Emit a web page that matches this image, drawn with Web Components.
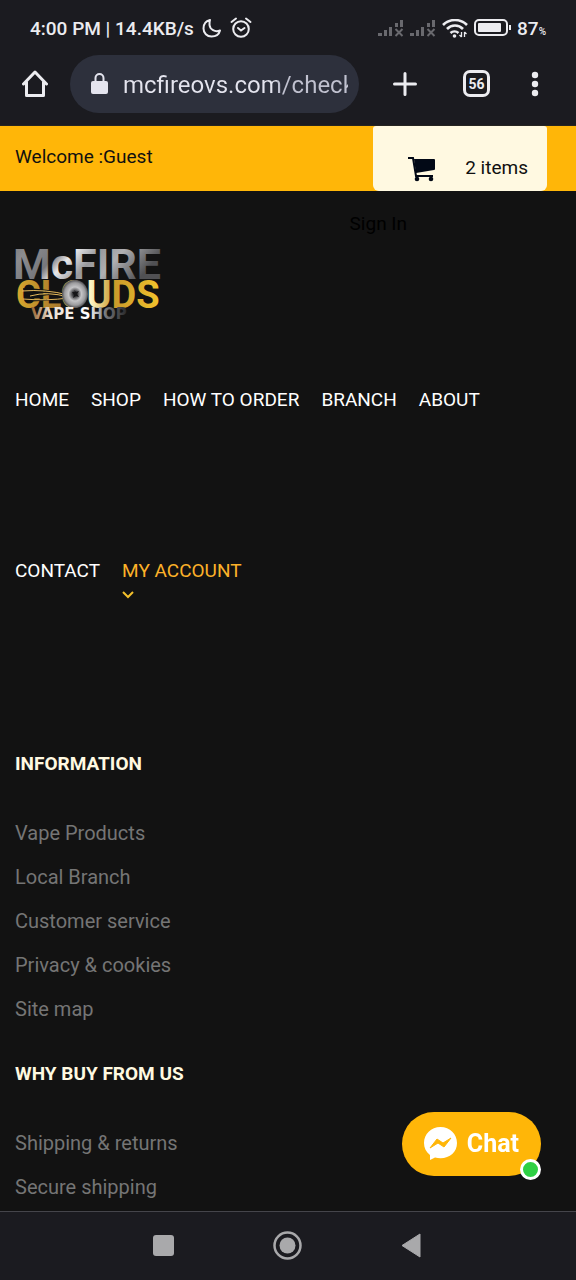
<!DOCTYPE html>
<html lang="en">
<head>
<meta charset="utf-8">
<meta name="viewport" content="width=device-width, initial-scale=1">
<title>McFire Clouds Vape Shop</title>
<style>
  body { margin: 0; background: #121212; font-family: Roboto, "Liberation Sans", sans-serif; }
</style>
</head>
<body>
<phone-screen>
  <status-bar slot="top"></status-bar>
  <browser-bar slot="top"></browser-bar>
  <shop-header></shop-header>
  <shop-nav></shop-nav>
  <footer-links>
    <span slot="title">INFORMATION</span>
    <footer-link>Vape Products</footer-link>
    <footer-link>Local Branch</footer-link>
    <footer-link>Customer service</footer-link>
    <footer-link>Privacy &amp; cookies</footer-link>
    <footer-link>Site map</footer-link>
  </footer-links>
  <footer-links>
    <span slot="title">WHY BUY FROM US</span>
    <footer-link>Shipping &amp; returns</footer-link>
    <footer-link>Secure shipping</footer-link>
  </footer-links>
  <chat-button slot="overlay">Chat</chat-button>
  <system-nav slot="bottom"></system-nav>
</phone-screen>
<script>
function define(name, html) {
  const template = document.createElement('template');
  template.innerHTML = html;
  customElements.define(name, class extends HTMLElement {
    constructor() {
      super();
      this.attachShadow({ mode: 'open' }).append(template.content.cloneNode(true));
    }
  });
}

define('phone-screen', `
<style>
  :host { display: flex; flex-direction: column; min-height: 100vh; }
  main { flex: 1; }
</style>
<slot name="top"></slot>
<main><slot></slot></main>
<slot name="overlay"></slot>
<slot name="bottom"></slot>`);

define('signal-icon', `
<style>
  :host, svg { display: block; }
</style>
<svg width="26" height="18" viewBox="0 0 26 18" fill="#69696e"><path d="M0 14h4v3H0zM6 11h3v6H6zM11 8h3v9h-3zM17 4h3v4h-3zM22 1h3v7h-3z"/><path d="m17.500 10 7 7m0-7-7 7" stroke="#69696e" stroke-width="2"/></svg>`);

define('status-bar', `
<style>
  :host { display: flex; align-items: center; height: 54px; padding: 2px 30px 0; box-sizing: border-box;
    background: #1b1b20; color: #ececf0; font-size: 19px; font-weight: 500; }
  .side { display: flex; align-items: center; }
  .left { flex: 1; gap: 8px; }
  .right { gap: 6px; }
  .pct { display: flex; align-items: baseline; }
  small { font-size: 10px; }
  svg { display: block; }
</style>
<div class="side left"><span>4:00 PM | 14.4KB/s</span>
<svg width="20" height="20" viewBox="0 0 20 20" fill="none" stroke="#ececf0" stroke-width="2" stroke-linejoin="round"><path d="M8 2C4 3 1.500 6.500 1.500 10.500c0 4.500 3.500 8 8 8 4 0 7.500-2 8.500-6-5 2-10-1-10.500-5.500C7.300 5 7.500 3.500 8 2z"/></svg>
<svg width="22" height="22" viewBox="0 0 22 22" fill="none" stroke="#ececf0" stroke-width="2" stroke-linecap="round"><circle cx="11" cy="12" r="7.800"/><path d="M1.500 5 6 1.500M20.500 5 16 1.500M8 11l3 2.500 3.500-2.500"/></svg>
</div>
<div class="side right">
<signal-icon></signal-icon>
<signal-icon></signal-icon>
<svg width="26" height="19" viewBox="0 0 26 19" fill="none" stroke="#ececf0" stroke-width="2.600"><path d="M1 6a17 17 0 0 1 24 0M5 10a11 11 0 0 1 16 0M8.500 14a6 6 0 0 1 8 0"/><circle cx="12.500" cy="17" r="1.800" fill="#ececf0" stroke="none"/><path d="M19.500 13v5m-2-2 2 2M22.500 18v-5m2 2-2-2" stroke-width="1.300"/></svg>
<svg width="37" height="18" viewBox="0 0 37 18"><rect x="1" y="1" width="32" height="15" rx="4" fill="none" stroke="#ececf0" stroke-width="2"/><rect x="4" y="4" width="23" height="9" rx="1" fill="#ececf0"/><path d="M35 6h2v5h-2z" fill="#ececf0"/></svg>
<span class="pct">87<small>%</small></span>
</div>`);

define('browser-bar', `
<style>
  :host { display: flex; align-items: center; height: 72px; padding: 0 23px 12px 22px; box-sizing: border-box;
    background: #1b1b20; border-bottom: 1px solid #262521; }
  button { display: grid; place-items: center; padding: 0; border: 0; background: none; color: #ececf0; font: 700 14px Roboto, sans-serif; }
  .home { width: 26px; margin-right: 22px; }
  .url { flex: 1; min-width: 0; display: flex; align-items: center; gap: 15px; height: 58px; padding: 0 11px 0 21px;
    box-sizing: border-box; border-radius: 29px; background: #2d303c; }
  input { flex: 1; min-width: 0; padding: 2px 0 0; border: 0; outline: 0; font: 24px/32px Roboto, sans-serif;
    color: transparent; background: linear-gradient(90deg, #e4e4ee 154px, #c0c1cf 154px); -webkit-background-clip: text; background-clip: text; }
  .plus { width: 28px; margin-left: 32px; }
  .tabs { width: 27px; height: 27px; box-sizing: border-box; margin-left: 44px; border: 3px solid #ececf0; border-radius: 7px; }
  .menu { width: 10px; margin-left: 40px; margin-right: 13px; }
  .menu, .plus, .home { height: 32px; }
  svg { display: block; }
</style>
<button class="home" aria-label="Home"><svg width="26" height="28" viewBox="0 0 26 28" fill="none" stroke="#ececf0" stroke-width="3" stroke-linejoin="round" stroke-linecap="round"><path d="M1.500 14 13 2l11.500 12M4.500 12v13.500h17V12"/></svg></button>
<label class="url" aria-label="Address">
<svg width="17" height="22" viewBox="0 0 17 22"><rect y="8" width="17" height="13" rx="2" fill="#e4e4ee"/><path d="M4.500 8V5a4 4 0 0 1 8 0v3" fill="none" stroke="#e4e4ee" stroke-width="2"/></svg>
<input type="text" value="mcfireovs.com/check" aria-label="Address"></label>
<button class="plus" aria-label="New tab"><svg width="24" height="24" viewBox="0 0 24 24" stroke="#ececf0" stroke-width="3" stroke-linecap="round"><path d="M12 1.500v21M1.500 12h21"/></svg></button>
<button class="tabs">56</button>
<button class="menu" aria-label="Menu"><svg width="8" height="26" viewBox="0 0 8 26" fill="#ececf0"><circle cx="4" cy="4" r="3.200"/><circle cx="4" cy="13" r="3.200"/><circle cx="4" cy="22" r="3.200"/></svg></button>`);

define('shop-logo', `
<style>
  :host { display: block; }
  a { display: block; width: 146px; }
  svg { display: block; overflow: visible; }
</style>
<a href="#" aria-label="McFire Clouds Vape Shop">
<svg width="146" height="73" viewBox="0 0 146 73">
  <defs>
    <linearGradient id="steel" x2="1" y2=".3"><stop stop-color="#77777a"/><stop offset=".15" stop-color="#8c8c8f"/><stop offset=".35" stop-color="#77777b"/><stop offset=".45" stop-color="#e8e8ea"/><stop offset=".6" stop-color="#98989b"/><stop offset=".75" stop-color="#b0b0b2"/><stop offset="1" stop-color="#505053"/></linearGradient>
    <linearGradient id="gold"><stop stop-color="#d9a82e"/><stop offset=".3" stop-color="#a8782b"/><stop offset=".52" stop-color="#fff5c5"/><stop offset=".68" stop-color="#c99a2b"/><stop offset="1" stop-color="#f2c22c"/></linearGradient>
    <linearGradient id="fade"><stop stop-color="#96602c"/><stop offset=".2" stop-color="#e9dfd2"/><stop offset=".6" stop-color="#ffffff"/><stop offset=".78" stop-color="#77777a"/><stop offset="1" stop-color="#29292b"/></linearGradient>
    <radialGradient id="coil"><stop stop-color="#17171a"/><stop offset=".2" stop-color="#424245"/><stop offset=".5" stop-color="#c4c4c6"/><stop offset=".8" stop-color="#9b9b9d"/><stop offset="1" stop-color="#4f4f52"/></radialGradient>
  </defs>
  <g font-family="Roboto, sans-serif" font-weight="700">
    <text x="-2" y="32" font-size="43" fill="url(#steel)">McFIRE</text>
    <text x="1" y="61" font-size="38" fill="url(#gold)">CLOUDS</text>
  </g>
  <path d="M8 42q20 0 44 5M10 46q18-3 42 3M16 51q20-7 38-1M12 54q22-1 42-3" fill="none" stroke="#121212" stroke-width="1.500"/>
  <path d="M7 44q24-2 46 4M15 49q18-5 38 1M8 52q24 2 45-1" fill="none" stroke="#e2b85c"/>
  <ellipse cx="60" cy="47" rx="13" ry="14" fill="url(#coil)"/>
  <path d="m59 43 2 2 3-1-2 3 2 3-3-1-3 2 1-3-2-3 3 0z" fill="#151517"/>
  <text x="16" y="72" font-family="DejaVu Sans, sans-serif" font-weight="700" font-size="15" fill="url(#fade)">VAPE SHOP</text>
</svg></a>`);

define('shop-header', `
<style>
  :host { display: block; font-size: 19px; color: #101010; }
  .bar { display: flex; align-items: stretch; justify-content: space-between; height: 65px; padding: 0 29px 0 15px; background: #ffb608; }
  .welcome { padding-top: 19px; line-height: 24px; }
  .cart { display: flex; align-items: flex-end; justify-content: space-between; width: 174px; box-sizing: border-box; padding: 0 19px 8px 34px;
    border-radius: 3px 3px 6px 6px; background: #fff9e1; color: #101010; text-decoration: none; line-height: 30px; }
  .cart svg { display: block; }
  .account { display: flex; justify-content: flex-end; padding: 21px 169px 0 0; line-height: 24px; }
  .account a { color: #000; text-decoration: none; }
  shop-logo { margin: 11px 15px 0; }
</style>
<div class="bar"><span class="welcome">Welcome :Guest</span>
<a class="cart" href="#"><svg width="29" height="27" viewBox="0 0 29 27" fill="#020916"><path d="M1 2h5l3 18h17" fill="none" stroke="#020916" stroke-width="2"/><path d="M7 3h20q1 0 1 1v9q0 1-1 1L9 17z"/><circle cx="10" cy="23" r="2.300"/><circle cx="24" cy="23" r="2.300"/></svg><span>2 items</span></a></div>
<div class="account"><a href="#">Sign In</a></div>
<shop-logo></shop-logo>`);

define('shop-nav', `
<style>
  :host { display: block; padding: 68px 15px 0; font-size: 19px; line-height: 24px; }
  nav { display: flex; flex-wrap: wrap; gap: 147px 22px; }
  a { color: #fff; text-decoration: none; }
  .active { color: #fcb129; }
  svg { display: block; margin: 8px 0; }
</style>
<nav><a href="#">HOME</a><a href="#">SHOP</a><a href="#">HOW TO ORDER</a><a href="#">BRANCH</a><a href="#">ABOUT</a><a href="#">CONTACT</a>
<a class="active" href="#">MY ACCOUNT<svg width="12" height="8" viewBox="0 0 12 8" fill="none" stroke="#f2bf2b" stroke-width="2"><path d="m1 1 5 5 5-5"/></svg></a></nav>`);

define('footer-links', `
<style>
  :host { display: block; padding: 0 15px; }
  :host(:first-of-type) { padding-top: 145px; }
  :host(:last-of-type) { padding-top: 31px; }
  h2 { margin: 0 0 35px; font-size: 19px; line-height: 24px; font-weight: 700; color: #fff9e1; }
</style>
<h2><slot name="title"></slot></h2>
<slot></slot>`);

define('footer-link', `
<style>
  :host { display: block; line-height: 44px; font-size: 20px; }
  a { color: #757575; text-decoration: none; }
</style>
<a href="#"><slot></slot></a>`);

define('chat-button', `
<style>
  :host { position: fixed; right: 35px; bottom: 104px; }
  button { display: flex; align-items: center; gap: 9px; height: 64px; padding: 0 22px 2px 21px; border: 0; border-radius: 32px;
    background: #ffb608; color: #fff; font: 700 25px Roboto, sans-serif; }
  i { position: absolute; right: 0; bottom: -4px; width: 15px; height: 15px; border: 3px solid #fff; border-radius: 50%; background: #2fd044; }
</style>
<button><svg width="35" height="35" viewBox="0 0 35 35"><path d="M17.500 1C8 1 1 8 1 17c0 5 2 9 6 12v5l5-2.500c2 .5 3.500.7 5.500.7C27 32.200 34 26 34 17S27 1 17.500 1z" fill="#fff"/><path d="m7 22 7-9 6 4 8-5-7 9-6-4z" fill="#ffb608" stroke="#ffb608" stroke-linejoin="round"/></svg><slot></slot></button><i></i>`);

define('system-nav', `
<style>
  :host { position: sticky; bottom: 0; display: flex; justify-content: center; align-items: center; gap: 95px; height: 69px; box-sizing: border-box;
    padding: 0 2px 2px 0; border-top: 1px solid #45454b; background: #1b1b20; }
  button { display: grid; place-items: center; width: 29px; padding: 0; border: 0; background: none; }
  svg { display: block; }
</style>
<button aria-label="Recent apps"><svg width="21" height="21"><rect width="21" height="21" rx="3" fill="#a9a9ab"/></svg></button>
<button aria-label="Home"><svg width="29" height="29"><circle cx="14.500" cy="14.500" r="13" fill="none" stroke="#a9a9ab" stroke-width="2.500"/><circle cx="14.500" cy="14.500" r="8" fill="#a9a9ab"/></svg></button>
<button aria-label="Back"><svg width="20" height="25" viewBox="0 0 20 25"><path d="M1 12.500 19 1v23z" fill="#a9a9ab" stroke="#a9a9ab" stroke-linejoin="round"/></svg></button>`);
</script>
</body>
</html>
